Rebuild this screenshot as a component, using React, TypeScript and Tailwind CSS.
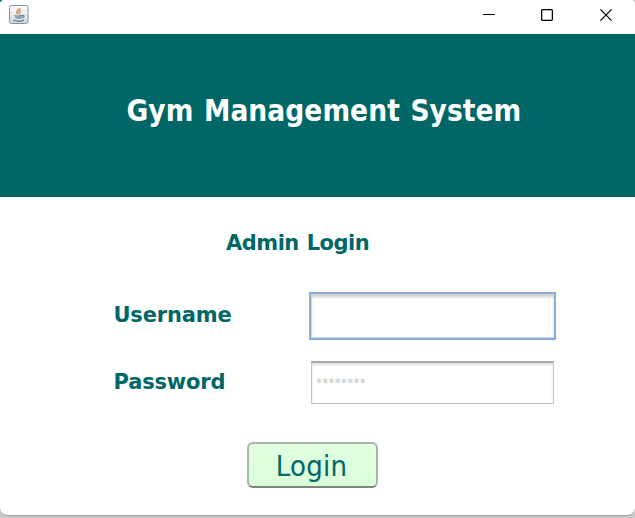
const tahoma = "font-['Tahoma','DejaVu_Sans_Condensed','DejaVu_Sans',sans-serif]";
const wide = "font-['DejaVu_Sans',sans-serif]";

function JavaIcon() {
  return (
    <svg width="20" height="20" viewBox="0 0 20 20" fill="none">
      <defs>
        <linearGradient id="tile" x1="0" y1="0" x2="0" y2="1">
          <stop offset="0" stopColor="#fdfdfd" />
          <stop offset="1" stopColor="#cdd9e3" />
        </linearGradient>
      </defs>
      <rect x="0.5" y="0.5" width="18.6" height="18" rx="2" fill="url(#tile)" stroke="#8295a5" />
      <path d="M10.8 2.800c.4 1.800-3.300 2.700-3.100 4.400.1.900 1.200 1.400 1.400 2.300M12.200 5.500c-2 .6-2.500 1.500-1.500 2.500.4.600.2 1-.2 1.500" stroke="#e58d49" strokeWidth="1.500" />
      <path d="M5.500 10.500c2.500.8 5.500.7 8 0M6.300 12.400c2 .7 4.500.7 6.300 0M4.300 15.200c3 1.200 8 1.100 10.800-.1M13.500 10.600c2-.6 2.300 1.600-.3 2.200" stroke="#66869c" strokeWidth="1.300" />
    </svg>
  );
}

function TitleBar() {
  return (
    <header className="flex h-[34px] shrink-0 justify-between">
      <div className="pl-[9px] pt-[5px]">
        <JavaIcon />
      </div>
      <div className="flex text-black">
        <button className="flex w-[58px] justify-center pt-[9px]" aria-label="Minimize">
          <svg width="12" height="12" viewBox="0 0 12 12" stroke="currentColor">
            <path d="M0 5.500h12" />
          </svg>
        </button>
        <button className="flex w-[58px] justify-center pt-[9px]" aria-label="Maximize">
          <svg width="12" height="12" viewBox="0 0 12 12" fill="none" stroke="currentColor" strokeWidth="1.300">
            <rect x="0.600" y="0.600" width="10.800" height="10.800" rx="1.200" />
          </svg>
        </button>
        <button className="flex w-[59px] justify-center pt-[9px]" aria-label="Close">
          <svg width="12" height="12" viewBox="0 0 12 12" fill="none" stroke="currentColor" strokeWidth="1.200">
            <path d="M0.400 0.400l11.200 11.200M11.600 0.400L0.400 11.600" />
          </svg>
        </button>
      </div>
    </header>
  );
}

export default function App() {
  return (
    <div className={`h-[518px] w-[635px] overflow-hidden bg-[#c9c9c9] ${tahoma}`}>
      <div className="h-[5px] w-[635px] bg-[linear-gradient(90deg,#006666_50%,#c9c9c9_50%)]" />
      <div className="-mt-[5px] flex h-[516px] w-[635px] flex-col overflow-hidden rounded-t-[4px] rounded-b-[8px] border-b border-[#a0a0a0] bg-white">
        <TitleBar />
        <div className="h-[163px] shrink-0 bg-[#006666] pl-[126.5px] pt-[59px]">
          <h1 className="whitespace-nowrap text-[29.5px] leading-[36px] font-bold tracking-[0.06px] [word-spacing:1.2px] text-white">Gym Management System</h1>
        </div>
        <main className="pl-[113px] text-[#006666]">
          <h2 className={`ml-[113px] mt-[32px] text-[21px] leading-[28px] font-bold tracking-[-0.5px] [word-spacing:1px] whitespace-nowrap ${wide}`}>Admin Login</h2>
          <div className="mt-[35px] flex h-[48px]">
            <label className={`w-[196px] pl-[0.5px] pt-[9px] text-[21px] leading-[28px] font-bold tracking-[-0.18px] ${wide}`}>Username</label>
            <div className="h-[48px] w-[247px] border-2 border-[#8aadd2] bg-white shadow-[inset_0_3px_3px_#cfcfcf,inset_1px_0_#cddcec,inset_0_-1px_#cddcec]" />
          </div>
          <div className="mt-[21px] flex h-[43px]">
            <label className={`w-[198px] pl-[0.5px] pt-[7px] text-[21px] leading-[28px] font-bold tracking-[-0.18px] ${wide}`}>Password</label>
            <div className="h-[43px] w-[243px] border border-t-2 border-[#c5c5c5] border-t-[#a9a9a9] bg-white pl-[4px] pt-[12px] text-[13px] leading-[16px] tracking-[0.4px] text-[#c4c4c4] shadow-[inset_0_2px_3px_#dedede]">********</div>
          </div>
          <button className="ml-[134px] mt-[38px] flex h-[46px] w-[131px] justify-center rounded-[6px] border-2 border-[#a9b5a9] border-b-[#7b877b] bg-linear-to-b from-[#e0ffe0] to-[#dafeda] pt-[4px] pr-[2px] text-[29px] leading-[36px] tracking-[0.2px]">
            Login
          </button>
        </main>
      </div>
    </div>
  );
}
